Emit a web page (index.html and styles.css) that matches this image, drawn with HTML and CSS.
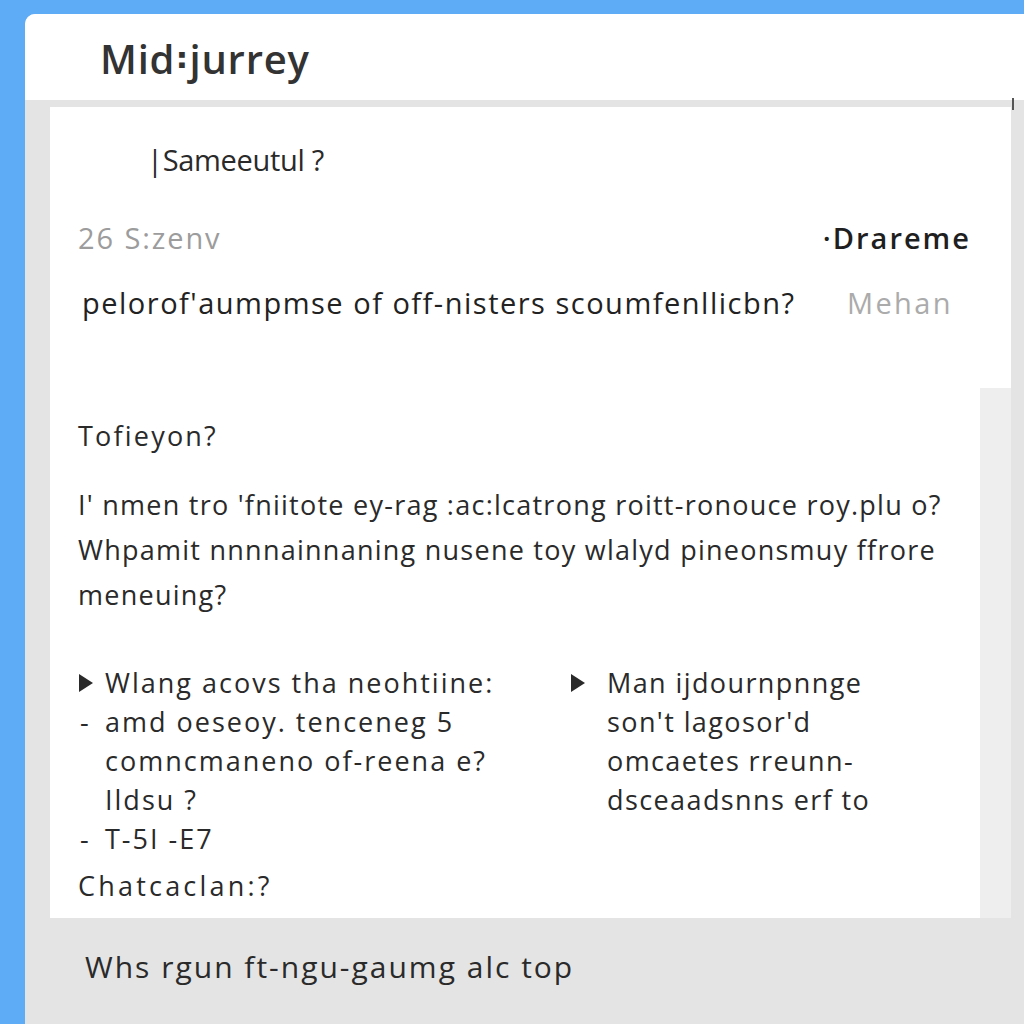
FILE: index.html
```html
<!DOCTYPE html>
<html>
<head>
<meta charset="utf-8">
<link rel="stylesheet" href="styles.css">
</head>
<body>
<div class="window">
  <header class="header"><span class="brand">Mid꞉jurrey</span></header>
  <div class="body">
    <span class="scroll-tick"></span>
    <section class="card-top">
      <div class="question">|Sameeutul ?</div>
      <div class="row meta">
        <span class="muted">26 S:zenv</span>
        <span class="strong">·Drareme</span>
      </div>
      <div class="row prompt">
        <span>pelorof'aumpmse of off-nisters scoumfenllicbn?</span>
        <span class="light">Mehan</span>
      </div>
    </section>
    <section class="card-bottom">
      <div class="content">
        <div class="heading">Tofieyon?</div>
        <p class="para">I' nmen tro 'fniitote ey-rag :ac:lcatrong roitt-ronouce roy.plu o?<br>Whpamit nnnnainnaning nusene toy wlalyd pineonsmuy ffrore<br>meneuing?</p>
        <div class="cols">
          <div class="col col-left">
            <div class="li"><svg class="tri" viewBox="0 0 16 20"><path d="M1 1 L15 10 L1 19 Z"/></svg><span>Wlang acovs tha neohtiine:</span></div>
            <div class="li"><span class="dash">-</span><span>amd oeseoy. tenceneg 5</span></div>
            <div class="li"><span class="dash"></span><span>comncmaneno of-reena e?</span></div>
            <div class="li"><span class="dash"></span><span>Ildsu ?</span></div>
            <div class="li"><span class="dash">-</span><span>T-5I -E7</span></div>
          </div>
          <div class="col col-right">
            <div class="li"><svg class="tri" viewBox="0 0 16 20"><path d="M1 1 L15 10 L1 19 Z"/></svg><span>Man ijdournpnnge</span></div>
            <div class="li"><span class="dash"></span><span>son't lagosor'd</span></div>
            <div class="li"><span class="dash"></span><span>omcaetes rreunn-</span></div>
            <div class="li"><span class="dash"></span><span>dsceaadsnns erf to</span></div>
          </div>
        </div>
        <div class="closing">Chatcaclan:?</div>
      </div>
      <div class="strip"></div>
    </section>
    <footer class="footer">Whs rgun ft-ngu-gaumg alc top</footer>
  </div>
</div>
</body>
</html>
```
FILE: styles.css
```css
html, body {
  margin: 0;
  padding: 0;
  background: #5eacf6;
  font-family: "Open Sans", "Liberation Sans", Arial, sans-serif;
  color: #2a2a2a;
}
body {
  height: 1024px;
  overflow: hidden;
}
.window {
  margin: 14px 0 0 25px;
  height: 1010px;
  background: #e4e4e4;
  border-top-left-radius: 10px;
  overflow: hidden;
}
.header {
  height: 86px;
  background: #ffffff;
  display: flex;
  align-items: center;
  padding-left: 75px;
}
.brand {
  font-size: 40px;
  font-weight: 600;
  color: #333333;
  letter-spacing: 0.8px;
  margin-top: 2px;
}
.body {
  position: relative;
  padding: 7px 13px 0 25px;
}
.scroll-tick {
  position: absolute;
  right: 10px;
  top: -2px;
  width: 2px;
  height: 12px;
  background: #555;
}
.card-top {
  background: #ffffff;
  height: 281px;
  padding: 33px 42px 0 28px;
  box-sizing: border-box;
  font-size: 29px;
  line-height: 40px;
}
.question {
  padding-left: 69px;
  letter-spacing: -0.3px;
}
.row {
  display: flex;
  justify-content: space-between;
}
.meta {
  margin-top: 38px;
  letter-spacing: 1.9px;
}
.muted {
  color: #9c9c9c;
}
.strong {
  color: #1f1f1f;
  font-weight: 600;
  letter-spacing: 2px;
  margin-right: -2px;
}
.prompt {
  margin-top: 25px;
  padding-left: 4px;
  padding-right: 16px;
  color: #222;
  letter-spacing: 1.5px;
}
.light {
  color: #ababab;
  letter-spacing: 2.4px;
}
.card-bottom {
  display: flex;
  height: 530px;
}
.content {
  flex: 1;
  background: #ffffff;
  padding: 28px 0 0 28px;
  font-size: 27px;
  letter-spacing: 1.2px;
}
.strip {
  width: 31px;
  background: #eeeeee;
}
.heading {
  line-height: 40px;
  letter-spacing: 2.2px;
}
.para {
  margin: 26px 0 0;
  line-height: 45px;
  letter-spacing: 1.25px;
}
.cols {
  display: flex;
  margin-top: 46px;
  line-height: 39px;
  font-size: 27px;
}
.col-left {
  width: 492px;
  letter-spacing: 2px;
}
.col-right {
  letter-spacing: 1.4px;
}
.li {
  display: flex;
  align-items: center;
}
.tri {
  width: 16px;
  height: 20px;
  fill: #2a2a2a;
  margin-right: 11px;
}
.dash {
  width: 27px;
  padding-left: 2px;
  box-sizing: border-box;
}
.col-right .tri {
  margin-right: 21px;
}
.col-right .dash {
  width: 37px;
}
.closing {
  margin-top: 8px;
  line-height: 40px;
  letter-spacing: 3.2px;
}
.footer {
  padding: 29px 0 0 35px;
  font-size: 30px;
  line-height: 40px;
  letter-spacing: 2px;
}
```
